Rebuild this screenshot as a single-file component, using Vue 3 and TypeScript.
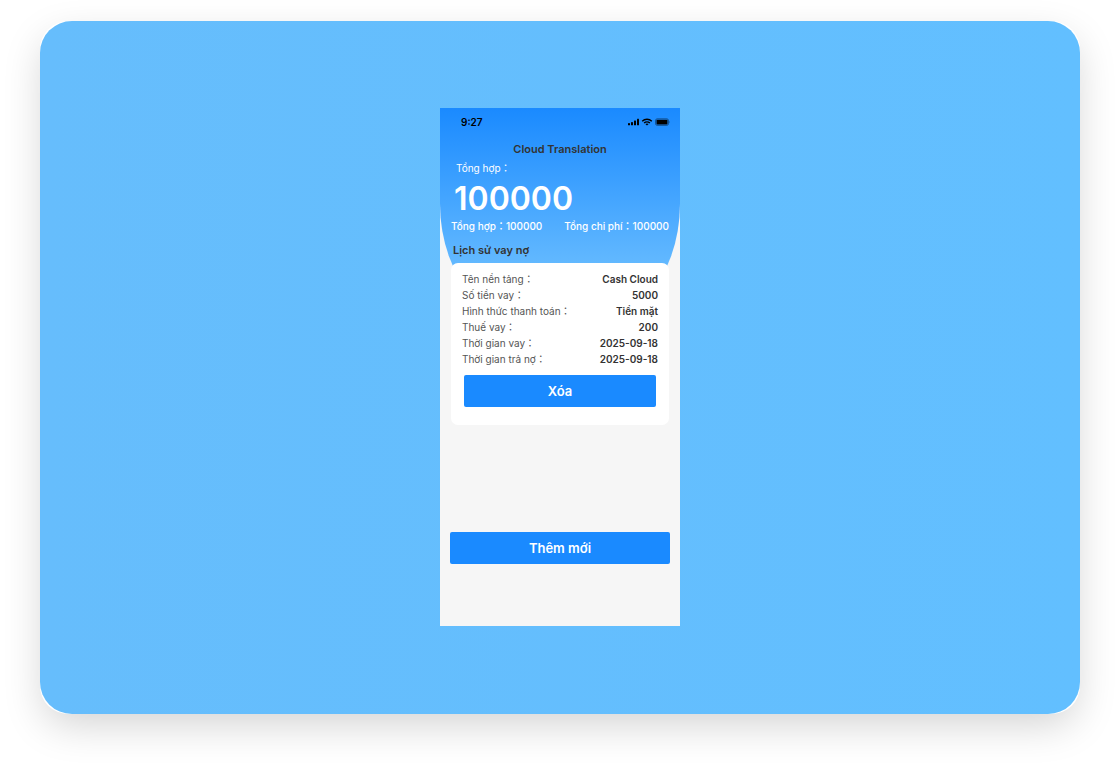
<script setup lang="ts">
interface Row {
  label: string
  value: string
}

const rows: Row[] = [
  { label: 'Tên nền tảng：', value: 'Cash Cloud' },
  { label: 'Số tiền vay：', value: '5000' },
  { label: 'Hình thức thanh toán：', value: 'Tiền mặt' },
  { label: 'Thuế vay：', value: '200' },
  { label: 'Thời gian vay：', value: '2025-09-18' },
  { label: 'Thời gian trả nợ：', value: '2025-09-18' },
]
</script>

<template>
  <div class="page">
    <div class="frame">
      <div class="stage">
        <main class="phone">
          <header class="hero">
            <div class="status">
              <span class="time">9:27</span>
              <svg class="indicators" width="43" height="8" viewBox="0 0 43 8" aria-hidden="true">
                <rect x="1" y="5" width="2" height="2.300" rx=".4" />
                <rect x="4" y="4" width="2" height="3.300" rx=".4" />
                <rect x="7" y="2.500" width="2" height="4.800" rx=".4" />
                <rect x="10" y=".8" width="2" height="6.500" rx=".4" />
                <g fill="none" stroke="#000" stroke-width="1.400">
                  <path d="M15.200 3.200C17.900 .6 22.100 .6 24.800 3.200" />
                  <path d="M17.100 5C18.700 3.500 21.300 3.500 22.900 5" />
                </g>
                <path d="M18.400 6Q20 4.900 21.600 6L20 7.600Z" />
                <rect x="28.500" y=".8" width="13" height="6.600" rx="1.800" fill="none" stroke="#000" stroke-opacity=".4" />
                <rect x="29.500" y="1.700" width="11" height="4.800" rx=".8" />
                <path d="M42.300 3Q43.500 4.100 42.300 5.200Z" fill-opacity=".45" />
              </svg>
            </div>
            <h1 class="title">Cloud Translation</h1>
            <p class="caption">Tổng hợp：</p>
            <p class="total">100000</p>
            <div class="sums">
              <span>Tổng hợp：100000</span>
              <span>Tổng chi phí：100000</span>
            </div>
            <h2 class="history">Lịch sử vay nợ</h2>
          </header>
          <section class="card">
            <dl class="rows">
              <div v-for="row in rows" :key="row.label" class="row">
                <dt>{{ row.label }}</dt>
                <dd>{{ row.value }}</dd>
              </div>
            </dl>
            <button type="button" class="button remove">Xóa</button>
          </section>
          <button type="button" class="button add">Thêm mới</button>
        </main>
      </div>
    </div>
  </div>
</template>

<style>
body {
  margin: 0;
  background: #fff;
}
</style>

<style scoped>
.page {
  padding: 21px 40px 60px;
  font-family: Inter, 'Noto Sans CJK JP', sans-serif;
}
.frame {
  border-radius: 28px;
  background: #fff;
  box-shadow: 0 14px 40px -4px rgba(0, 0, 0, 0.18);
}
.stage {
  display: flex;
  justify-content: center;
  padding: 87px 0 88px;
  border-radius: 32px;
  background: linear-gradient(90deg, #66bdfc, #62bfff);
}
.phone {
  display: flex;
  flex-direction: column;
  width: 240px;
  padding-bottom: 62px;
  background: #f6f6f6;
}
.hero {
  padding: 8px 10px 84px;
  border-radius: 0 0 50% 50% / 0 0 138px 138px;
  background: linear-gradient(180deg, #1a8aff, #66bbff 164px);
  color: #fff;
}
.status {
  display: flex;
  align-items: center;
  justify-content: space-between;
  height: 12px;
  padding: 0 0 0 11px;
  color: #000;
}
.time {
  font-size: 10px;
  font-weight: 600;
  line-height: 12px;
}
.title {
  margin: 13px 0 0;
  color: #333;
  font-size: 11px;
  font-weight: 600;
  line-height: 16px;
  text-align: center;
}
.caption {
  margin: 3px 0 0 6px;
  font-size: 10px;
  line-height: 16px;
}
.total {
  margin: 4px 0 0 4px;
  font-size: 32px;
  font-weight: 600;
  line-height: 38px;
}
.sums {
  display: flex;
  justify-content: space-between;
  padding: 0 1px;
  font-size: 10px;
  font-weight: 500;
  line-height: 16px;
  white-space: nowrap;
}
.history {
  margin: 8px 0 0 3px;
  color: #333;
  font-size: 11px;
  font-weight: 600;
  line-height: 16px;
}
.card {
  margin: -79px 11px 0 11px;
  padding: 8px 11px 18px;
  border-radius: 7px;
  background: #fff;
}
.rows {
  margin: 0;
}
.row {
  display: flex;
  justify-content: space-between;
  font-size: 10px;
  line-height: 16px;
  white-space: nowrap;
}
dt {
  color: #555;
}
dd {
  margin: 0;
  color: #333;
  font-weight: 600;
}
.button {
  height: 32px;
  border: 0;
  border-radius: 2px;
  background: #1a8aff;
  color: #fff;
  font: inherit;
  font-size: 13px;
  font-weight: 600;
  line-height: 16px;
  cursor: pointer;
}
.remove {
  display: block;
  width: calc(100% - 4px);
  margin: 8px 2px 0;
}
.add {
  margin: 107px 10px 0;
}
</style>
